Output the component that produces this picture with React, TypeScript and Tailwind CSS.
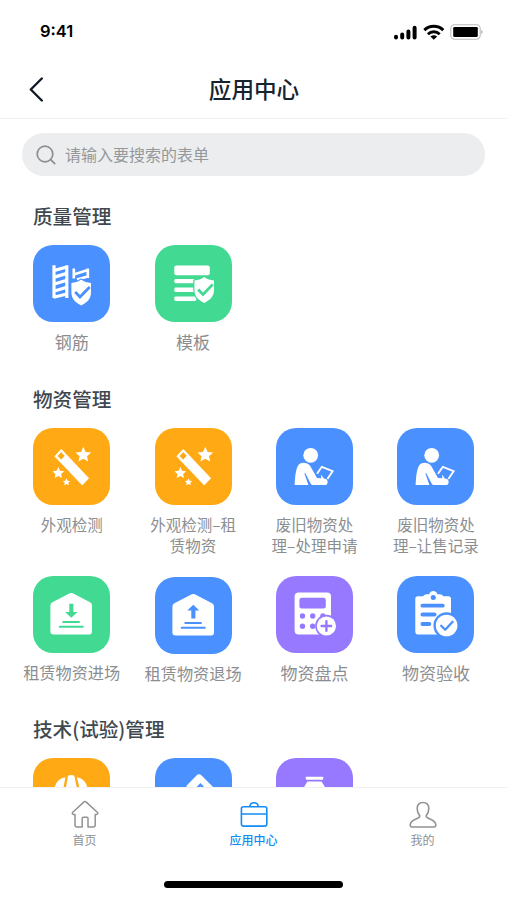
import type { ReactNode } from "react";

const BLUE = "bg-[#4a91ff]";
const GREEN = "bg-[#42d993]";
const ORANGE = "bg-[#ffa915]";
const PURPLE = "bg-[#9679ff]";

function Glyph({ children }: { children: ReactNode }) {
  return (
    <svg viewBox="0 0 77 77" className="size-[77px]" fill="white">
      {children}
    </svg>
  );
}

function Shield({ x, y, color }: { x: number; y: number; color: string }) {
  return (
    <g transform={`translate(${x} ${y})`}>
      <path
        d="M0-13 C3-10.8 6-9.8 9.8-9.6 V0 C9.8 6 6 10 0 13 C-6 10-9.8 6-9.8 0 V-9.6 C-6-9.8-3-10.8 0-13Z"
        stroke={color}
        strokeWidth="2.4"
        paintOrder="stroke"
        strokeLinejoin="round"
      />
      <path d="M-6-.5 L-1.2 4.4 L8.5-5.6" fill="none" stroke={color} strokeWidth="2.8" />
    </g>
  );
}

function RebarIcon() {
  return (
    <Glyph>
      <path
        d="M21 20.2V53 M33.8 20.2V53 M20.7 25.6 L33.8 22 M20.7 32.4 L33.8 28.4 M20.7 39.3 L33.8 35.3 M20.7 46.2 L33.8 42.2 M20.7 52.3 L33.8 49"
        fill="none"
        stroke="white"
        strokeWidth="3.2"
      />
      <path d="M40.8 23.5V33.5 M54.8 23.5V33 M40.8 29.5 L54.8 25 M44 34.5 L54.8 31.5" fill="none" stroke="white" strokeWidth="2.7" />
      <Shield x={48.2} y={47.6} color="#4a91ff" />
    </Glyph>
  );
}

function TemplateIcon() {
  return (
    <Glyph>
      <rect x="19.3" y="20.6" width="35.5" height="9.6" rx="2" />
      <rect x="19.3" y="34" width="22" height="4.2" rx="1.4" />
      <rect x="19.3" y="42.6" width="22" height="4.4" rx="1.4" />
      <rect x="19.3" y="51.4" width="22" height="4.6" rx="1.4" />
      <Shield x={49.2} y={45} color="#42d993" />
    </Glyph>
  );
}

const STAR =
  "M0-10 L2.9-3.6 L9.8-2.9 L4.7 1.8 L6.1 8.4 L0 5 L-6.1 8.4 L-4.7 1.8 L-9.8-2.9 L-2.9-3.6Z";

function WandIcon() {
  return (
    <Glyph>
      <path
        fillRule="evenodd"
        d="M28.3 21.3 L55.7 50.3 L49.2 57 L21.8 28.3Z M28.2 23.8 L24.2 28 L28.2 32 L32 27.8Z"
        stroke="white"
        strokeWidth=".7"
        strokeLinejoin="round"
      />
      <path d={STAR} transform="translate(50.3 26.8) scale(.8)" />
      <path d={STAR} transform="translate(25.3 45) scale(.6)" />
      <path d={STAR} transform="translate(33.5 54) scale(.38)" />
    </Glyph>
  );
}

function ClerkIcon() {
  return (
    <Glyph>
      <circle cx="34.7" cy="27.3" r="7.4" />
      <path d="M18.6 57 C19 49 19.6 43 21.3 39 C23 35.3 26 34.7 28.5 34.9 C31.5 35 33 36 34.5 38.5 L41 50 L45.4 50.3 L44.8 46.5 L48 50.5 L50.5 51.3 C52.2 52.7 52 57 49.6 57 H36.8 Q35.4 57 34.6 55.4 L29.2 45 L28.4 45.4 L32.4 57Z" />
      <path d="M41 45.7 L45.8 38.8 L56.6 43.2 L51.4 51" fill="none" stroke="white" strokeWidth="1.9" />
    </Glyph>
  );
}

function WarehouseIcon({ color, up = false }: { color: string; up?: boolean }) {
  return (
    <Glyph>
      <path d="M36.8 17.3 Q38.3 16.5 39.8 17.3 L57 26.2 Q59 27.3 59 29.4 V55.4 Q59 58.4 56 58.4 H20.4 Q17.4 58.4 17.4 55.4 V29.4 Q17.4 27.3 19.4 26.2Z" />
      <path
        d={
          up
            ? "M38.3 27.8 L44.3 33.6 H40.4 V41.5 H36.3 V33.6 H32.3Z"
            : "M36.3 27.8 H40.4 V36 H44.5 L38.3 41.8 L32.1 36 H36.3Z"
        }
        fill={color}
      />
      <path d="M30.3 46.1 H46 M26.7 50.7 H49.8" stroke={color} strokeWidth="2" strokeLinecap="round" />
    </Glyph>
  );
}

function CalculatorIcon() {
  return (
    <Glyph>
      <rect x="18.6" y="16.6" width="36.4" height="41.8" rx="4" />
      <g fill="#9679ff">
        <rect x="23.4" y="21.7" width="26.4" height="10.8" rx="2.5" />
        <circle cx="26.5" cy="40" r="2.7" />
        <circle cx="36.7" cy="40" r="2.7" />
        <circle cx="46.9" cy="40" r="2.7" />
        <circle cx="26.5" cy="50.3" r="2.7" />
        <circle cx="36.7" cy="50.3" r="2.7" />
        <circle cx="50.4" cy="50" r="11.2" />
      </g>
      <circle cx="50.4" cy="50" r="9.6" />
      <path d="M45.6 50 H55.2 M50.4 45.2 V54.8" stroke="#9679ff" strokeWidth="2.4" strokeLinecap="round" />
    </Glyph>
  );
}

function ClipboardIcon() {
  return (
    <Glyph>
      <path d="M21 20.2 H26 Q27.5 18.2 30 18.2 H32 Q33.5 15 36.3 15 Q39 15 40.5 18.2 H42.5 Q45 18.2 46.5 20.2 H51.3 Q54 20.2 54 23 V55.5 Q54 58.4 51.3 58.4 H21 Q18.3 58.4 18.3 55.5 V23 Q18.3 20.2 21 20.2Z" />
      <circle cx="36.3" cy="21.4" r="2.5" fill="#4a91ff" />
      <path d="M25.4 29.7 H45.8 M25.4 38.5 H37.6 M25.4 48 H32.4" stroke="#4a91ff" strokeWidth="3.8" strokeLinecap="round" />
      <circle cx="49.6" cy="49.5" r="13.2" fill="#4a91ff" />
      <circle cx="49.6" cy="49.5" r="10.8" />
      <path d="M44.2 49.7 L48.2 53.8 L55.6 45.8" fill="none" stroke="#4a91ff" strokeWidth="2.3" strokeLinecap="round" strokeLinejoin="round" />
    </Glyph>
  );
}

function HelmetIcon() {
  return (
    <Glyph>
      <path d="M35 17.8 Q38 16.2 41.3 17.8 L44.3 32 H32.5Z" />
      <path d="M32.4 19.2 L30 32 H21 Q23 20.2 32.4 19.2Z" />
      <path d="M43.8 19.2 L47 32 H55 Q53 20.2 43.8 19.2Z" />
    </Glyph>
  );
}

function HammerIcon() {
  return (
    <Glyph>
      <path d="M41.5 17.4 Q44 15 46.5 17.4 L62 33 L56 39 L45.5 26 L36 34 L32.2 30 Q30.8 28.5 32.2 27Z" />
      <path d="M45.5 25 L52 32 H39Z" fill="#4a91ff" />
      <path d="M45.5 28.4 L49 32 H42Z" />
    </Glyph>
  );
}

function FlaskIcon() {
  return (
    <Glyph>
      <rect x="29.8" y="18.7" width="17.4" height="3" rx=".6" />
      <path d="M31.5 23.6 H45.5 L51.5 33 H25.5Z" />
    </Glyph>
  );
}

type Item = { label: string[]; bg: string; icon: ReactNode; text?: string; drop?: string };

function AppTile({ label, bg, icon, text = "text-[17px]", drop = "" }: Item) {
  return (
    <div className={`flex flex-col items-center ${drop}`}>
      <div className={`size-[77px] rounded-[20px] ${bg}`}>{icon}</div>
      <div className={`mt-[9px] text-center leading-[21.5px] whitespace-nowrap text-[#8b8e91] ${text}`}>
        {label.map((line) => (
          <div key={line}>{line}</div>
        ))}
      </div>
    </div>
  );
}

function Heading({ children }: { children: ReactNode }) {
  return <h2 className="h-7 pl-[33px] text-[19.6px] leading-7 font-medium text-[#40484f]">{children}</h2>;
}

function Row({ items }: { items: Item[] }) {
  return (
    <div className="ml-[11px] grid w-[485.6px] grid-cols-4">
      {items.map((item, i) => (
        <AppTile key={i} {...item} />
      ))}
    </div>
  );
}

const small = "text-[15.5px]";
const medium = "text-[16.2px]";

const quality: Item[] = [
  { label: ["钢筋"], bg: BLUE, icon: <RebarIcon /> },
  { label: ["模板"], bg: GREEN, icon: <TemplateIcon /> },
];

const materialsTop: Item[] = [
  { label: ["外观检测"], bg: ORANGE, icon: <WandIcon />, text: small },
  { label: ["外观检测–租", "赁物资"], bg: ORANGE, icon: <WandIcon />, text: small },
  { label: ["废旧物资处", "理–处理申请"], bg: BLUE, icon: <ClerkIcon />, text: small },
  { label: ["废旧物资处", "理–让售记录"], bg: BLUE, icon: <ClerkIcon />, text: small },
];

const materialsBottom: Item[] = [
  { label: ["租赁物资进场"], bg: GREEN, icon: <WarehouseIcon color="#42d993" />, text: medium },
  { label: ["租赁物资退场"], bg: BLUE, icon: <WarehouseIcon color="#4a91ff" up />, text: medium, drop: "pt-px" },
  { label: ["物资盘点"], bg: PURPLE, icon: <CalculatorIcon /> },
  { label: ["物资验收"], bg: BLUE, icon: <ClipboardIcon /> },
];

const technical: Item[] = [
  { label: [], bg: ORANGE, icon: <HelmetIcon /> },
  { label: [], bg: BLUE, icon: <HammerIcon /> },
  { label: [], bg: PURPLE, icon: <FlaskIcon /> },
];

function StatusBar() {
  return (
    <div className="flex h-[62px] shrink-0 items-center justify-between pr-[23px] pl-10">
      <span className="font-['Inter'] text-[16.5px] font-semibold text-black">9:41</span>
      <svg viewBox="0 0 92 20" className="mt-px h-5 w-[92px]">
        <g stroke="black" strokeWidth="4" strokeLinecap="round">
          <path d="M4 14.8V15.6 M10.2 12.6V15.6 M16.4 9.4V15.6 M22.6 5.8V15.6" />
        </g>
        <g fill="none" stroke="black" strokeWidth="2.9">
          <path d="M32.3 8.1 A13.8 13.8 0 0 1 51.3 8.1" />
          <path d="M35.9 12.2 A8.4 8.4 0 0 1 47.7 12.2" />
        </g>
        <path d="M38.4 14.6 Q41.8 11.8 45.2 14.6 L41.8 17.8Z" />
        <rect x="58.8" y="2.8" width="29.4" height="14.4" rx="3.6" fill="none" stroke="#bcbcbc" strokeWidth="1.1" />
        <rect x="61.2" y="5" width="24.6" height="10" rx="1.2" />
        <path d="M89.4 7.8 Q92 10 89.4 12.2Z" fill="#aaa" />
      </svg>
    </div>
  );
}

function TabBar() {
  return (
    <nav className="flex h-[113px] shrink-0 flex-col items-center border-t border-[#f0f1f2] bg-white">
      <div className="grid w-full grid-cols-3 text-center text-[12px] leading-[18px] text-[#8f9092]">
        <div className="flex flex-col items-center pt-3">
          <svg viewBox="0 0 30 30" className="size-[30px]" fill="none" stroke="#939393" strokeWidth="1.5" strokeLinejoin="round">
            <path d="M14 1.9 Q15 1.1 16 1.9 L27.3 12.2 Q28.6 13.8 26.8 14.4 H25.2 V25 Q25.2 27 23.2 27 H18 V18.3 Q18 17.3 17 17.3 H13.2 Q12.2 17.3 12.2 18.3 V27 H7 Q5 27 5 25 V14.4 H3.2 Q1.6 13.8 2.8 12.2Z" />
          </svg>
          <span className="mt-px">首页</span>
        </div>
        <div className="flex flex-col items-center pt-3 font-medium text-[#148cf5]">
          <svg viewBox="0 0 30 30" className="size-[30px]" fill="none" stroke="#148cf5" strokeWidth="1.6">
            <rect x="2.4" y="6.8" width="25.4" height="19.3" rx="2" />
            <path d="M2.4 14 H27.8 M10.8 6.8 Q11 2.7 15 2.7 Q19 2.7 19.3 6.8" />
          </svg>
          <span className="mt-px">应用中心</span>
        </div>
        <div className="flex flex-col items-center pt-3">
          <svg viewBox="0 0 30 30" className="size-[30px]" fill="none" stroke="#939393" strokeWidth="1.6" strokeLinejoin="round">
            <path d="M15 2.5 C19 2.5 20.8 5.2 20.8 8.8 C20.8 12 19.5 14.2 18.2 15.8 C18 17.2 19.5 18 21.5 18.8 C25.5 20.4 27.8 22 27.8 25 Q27.8 27 26 27 H4 Q2.2 27 2.2 25 C2.2 22 4.5 20.4 8.5 18.8 C10.5 18 12 17.2 11.8 15.8 C10.5 14.2 9.2 12 9.2 8.8 C9.2 5.2 11 2.5 15 2.5Z" />
          </svg>
          <span className="mt-px">我的</span>
        </div>
      </div>
      <div className="mt-[32px] h-[7px] w-[179px] rounded-full bg-black" />
    </nav>
  );
}

export default function App() {
  return (
    <div className="flex h-[900px] w-[507px] flex-col overflow-hidden bg-white font-['Noto_Sans_CJK_SC',sans-serif]">
      <StatusBar />
      <header className="grid h-[57.4px] shrink-0 grid-cols-3 items-center border-b border-[#f1f2f3]">
        <svg viewBox="0 0 16 26" className="mb-0.5 ml-7 h-[26px] w-4" fill="none" stroke="#111a26" strokeWidth="2.4" strokeLinecap="round" strokeLinejoin="round">
          <path d="M13.8 2.5 L2.8 13.5 L13.8 24.5" />
        </svg>
        <h1 className="pb-0.5 pl-px text-center text-[22.6px] leading-8 font-medium text-[#182330]">应用中心</h1>
      </header>
      <main className="min-h-0 flex-1 overflow-hidden">
        <div className="mx-[22px] mt-3.5 flex h-[43px] items-center rounded-full bg-[#ebedee] pl-3.5">
          <svg viewBox="0 0 20 20" className="size-5" fill="none" stroke="#8c8f91" strokeWidth="1.7" strokeLinecap="round">
            <circle cx="9" cy="9" r="7.8" />
            <path d="M14.7 14.7 L18.7 18.7" />
          </svg>
          <span className="ml-[9px] pb-px text-[16px] leading-6 text-[#95989b]">请输入要搜索的表单</span>
        </div>
        <section className="mt-[26px] h-[182.6px]">
          <Heading>质量管理</Heading>
          <div className="mt-[15px]">
            <Row items={quality} />
          </div>
        </section>
        <section className="h-[330px]">
          <Heading>物资管理</Heading>
          <div className="mt-[15px] h-[148px]">
            <Row items={materialsTop} />
          </div>
          <Row items={materialsBottom} />
        </section>
        <section>
          <Heading>技术(试验)管理</Heading>
          <div className="mt-[15px]">
            <Row items={technical} />
          </div>
        </section>
      </main>
      <TabBar />
    </div>
  );
}
